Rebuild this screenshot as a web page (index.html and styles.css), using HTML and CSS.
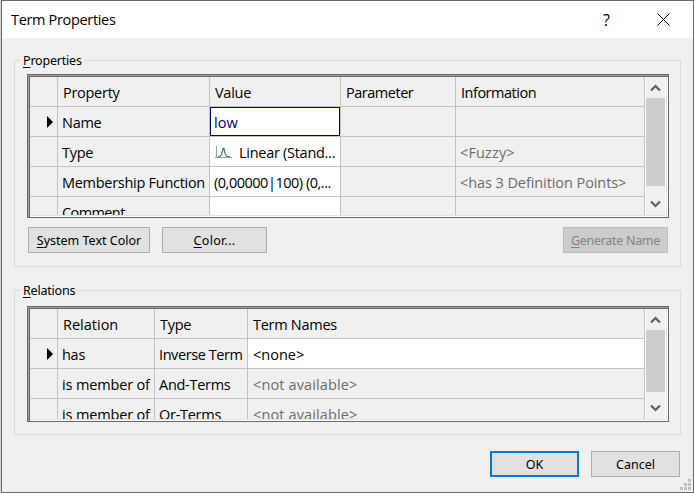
FILE: index.html
```
<!DOCTYPE html>
<html lang="en">
<head>
<meta charset="utf-8">
<title>Term Properties</title>
<link rel="stylesheet" href="styles.css">
</head>
<body>
<main class="dialog">
  <header class="titlebar">
    <h1>Term Properties</h1>
    <span class="help">?</span>
    <svg class="close" width="13" height="13" viewBox="0 0 13 13"><path d="M.5 .5l12 12M12.5 .5l-12 12"/></svg>
  </header>

  <section class="group group-properties">
    <h2><u>P</u>roperties</h2>
    <div class="frame">
      <div class="grid properties">
        <div></div><div class="head">Property</div><div class="head">Value</div><div class="head tight">Parameter</div><div class="head tight">Information</div>
        <div class="marker"><svg width="6" height="12" viewBox="0 0 6 12"><path d="M0 0l6 6-6 6z"/></svg></div><div>Name</div><div class="edit selected">low</div><div></div><div></div>
        <div></div><div>Type</div><div class="edit"><svg class="curve" width="17" height="13" viewBox="0 0 17 13"><path class="axis" d="M1.5 0v11.5M0 11.5h17"/><path class="line" d="M3 10.5h2Q7 9 8 2.500h1Q10 9 12 10.500h3"/></svg><span class="stand">Linear (Stand...</span></div><div></div><div class="dim">&lt;Fuzzy&gt;</div>
        <div></div><div class="member">Membership Function</div><div class="edit tight">(0,00000|100) (0,...</div><div></div><div class="dim points">&lt;has 3 Definition Points&gt;</div>
        <div></div><div class="comment">Comment</div><div class="edit"></div><div></div><div></div>
      </div>
      <div class="scrollbar">
        <svg width="11" height="8" viewBox="0 0 11 8"><path d="M1 6.500l4.500-4.500 4.500 4.500"/></svg>
        <div class="thumb"></div>
        <svg width="11" height="8" viewBox="0 0 11 8"><path d="M1 1.500l4.500 4.500 4.500-4.500"/></svg>
      </div>
    </div>
    <div class="actions">
      <button class="system"><u>S</u>ystem Text Color</button>
      <button class="color"><u>C</u>olor...</button>
      <button class="generate" disabled><u>G</u>enerate Name</button>
    </div>
  </section>

  <section class="group group-relations">
    <h2><u>R</u>elations</h2>
    <div class="frame">
      <div class="grid relations">
        <div></div><div class="head">Relation</div><div class="head">Type</div><div class="head">Term Names</div>
        <div class="marker"><svg width="6" height="12" viewBox="0 0 6 12"><path d="M0 0l6 6-6 6z"/></svg></div><div>has</div><div class="inverse">Inverse Term</div><div class="edit none">&lt;none&gt;</div>
        <div></div><div class="of">is member of</div><div>And-Terms</div><div class="dim">&lt;not available&gt;</div>
        <div></div><div class="of">is member of</div><div>Or-Terms</div><div class="dim">&lt;not available&gt;</div>
      </div>
      <div class="scrollbar">
        <svg width="11" height="8" viewBox="0 0 11 8"><path d="M1 6.500l4.500-4.500 4.500 4.500"/></svg>
        <div class="thumb"></div>
        <svg width="11" height="8" viewBox="0 0 11 8"><path d="M1 1.500l4.500 4.500 4.500-4.500"/></svg>
      </div>
    </div>
  </section>

  <footer>
    <button class="ok">OK</button>
    <button class="cancel">Cancel</button>
  </footer>
  <svg class="grip" width="11" height="11" viewBox="0 0 11 11"><path d="M8 0h3v3H8zM4 4h3v3H4zM8 4h3v3H8zM0 8h3v3H0zM4 8h3v3H4zM8 8h3v3H8z"/></svg>
</main>
</body>
</html>
```
FILE: styles.css
```
* { box-sizing: border-box; }
body {
  margin: 0;
  padding-left: 1px;
  height: 493px;
  overflow: hidden;
  background: #d4d4d4;
  color: #000;
  font-family: "Open Sans", sans-serif;
}
.dialog {
  position: relative;
  width: 693px;
  height: 493px;
  border: 1px solid #696969;
  background: #f0f0f0;
  display: flex;
  flex-direction: column;
}
.titlebar {
  height: 37px;
  flex: none;
  background: #fff;
  display: flex;
  align-items: center;
  padding: 0 23px 0 9px;
}
h1 { margin: 0 auto 0 0; font-size: 14.5px; font-weight: 400; line-height: 20px; letter-spacing: -.33px; }
.help { font-size: 16px; width: 9px; margin-right: 45px; }
.close path { stroke: #000; stroke-width: 1; fill: none; }

.group {
  flex: none;
  width: 667px;
  margin-left: 12px;
  border: 1px solid #dcdcdc;
  padding: 0 11px 0 12px;
}
.group-properties { height: 207px; margin-top: 22px; }
.group-relations { height: 145px; margin-top: 23px; }
h2 {
  width: max-content;
  height: 16px;
  margin: -8px 0 5px -6px;
  padding: 0 2px;
  background: #f0f0f0;
  font: 12.500px/16px "Noto Sans", sans-serif;
  letter-spacing: -.2px;
}
.group-relations h2 { margin-bottom: 7px; }
u { text-decoration: underline; text-decoration-thickness: 1px; text-underline-offset: 2px; }

.frame {
  width: 642px;
  height: 144px;
  border: 1px solid #696969;
  box-shadow: inset 1px 1px #a0a0a0, inset 2px 2px #696969, inset -1px -1px #fff, inset -2px -2px #e3e3e3;
  padding: 2px;
  display: flex;
}
.group-relations .frame { height: 116px; }
.grid {
  width: 615px;
  height: 100%;
  overflow: hidden;
  display: grid;
  grid-auto-rows: 30px;
  font-size: 14.500px;
  line-height: 29px;
  letter-spacing: -.28px;
  white-space: nowrap;
}
.properties { grid-template-columns: 28px 152px 131px 115px 189px; }
.relations { grid-template-columns: 28px 97px 93px 397px; }
.grid > div { border: solid #c3c3c3; border-width: 0 1px 1px 0; padding-left: 4px; padding-top: 1px; overflow: hidden; }
.grid > .head { padding-left: 5px; }
.relations > .head:nth-child(2) { letter-spacing: 0; }
.grid > .tight { letter-spacing: -.48px; }
.grid > .comment { letter-spacing: -.6px; }
.grid > .inverse { letter-spacing: -.42px; }
.grid > .of { letter-spacing: -.15px; }
.grid > .none { letter-spacing: 0; }
.grid > .edit { background: #fff; }
.grid > .selected { position: relative; color: #000080; letter-spacing: 0; }
.selected::after { content: ""; position: absolute; inset: 0; border: 1px solid #000080; }
.grid > .dim { color: #6d6d6d; letter-spacing: .13px; }
.grid > .points { letter-spacing: -.08px; }
.grid > .marker { padding: 9px 0 0 17px; line-height: 0; }
.relations .edit, .relations .dim { padding-left: 5px; }
.curve { vertical-align: -1px; margin: 0 7px 0 1px; }
.curve path { fill: none; }
.axis { stroke: #a0a0a0; }
.line { stroke: #2f7d46; stroke-width: 1.200; }

.scrollbar {
  width: 21px;
  border-left: 1px solid #fff;
  border-right: 1px solid #fff;
  display: flex;
  flex-direction: column;
  align-items: center;
  padding: 7px 0;
}
.scrollbar path { fill: none; stroke: #606060; stroke-width: 2.200; }
.scrollbar svg { flex: none; }
.thumb { flex: none; width: 19px; height: 88px; margin: 6px 0 auto; background: #cdcdcd; }
.group-relations .thumb { height: 62px; }

.actions { display: flex; margin: 9px 0 0 1px; width: 640px; }
button {
  height: 26px;
  padding: 1px 0 0;
  border: 1px solid #adadad;
  border-radius: 0;
  background: #e1e1e1;
  color: #000;
  font: 12.500px/22px "Noto Sans", sans-serif;
}
.system { width: 122px; }
.color { width: 105px; margin-left: 12px; letter-spacing: .3px; }
.generate { width: 105px; margin-left: auto; background: #ccc; border-color: #bfbfbf; color: #838383; letter-spacing: -.3px; }
footer { display: flex; gap: 12px; margin: 16px 0 0 488px; }
footer button { width: 89px; }
.ok { border: 2px solid #0078d7; }
.grip { position: absolute; right: 2px; bottom: 2px; fill: #bfbfbf; }
```
